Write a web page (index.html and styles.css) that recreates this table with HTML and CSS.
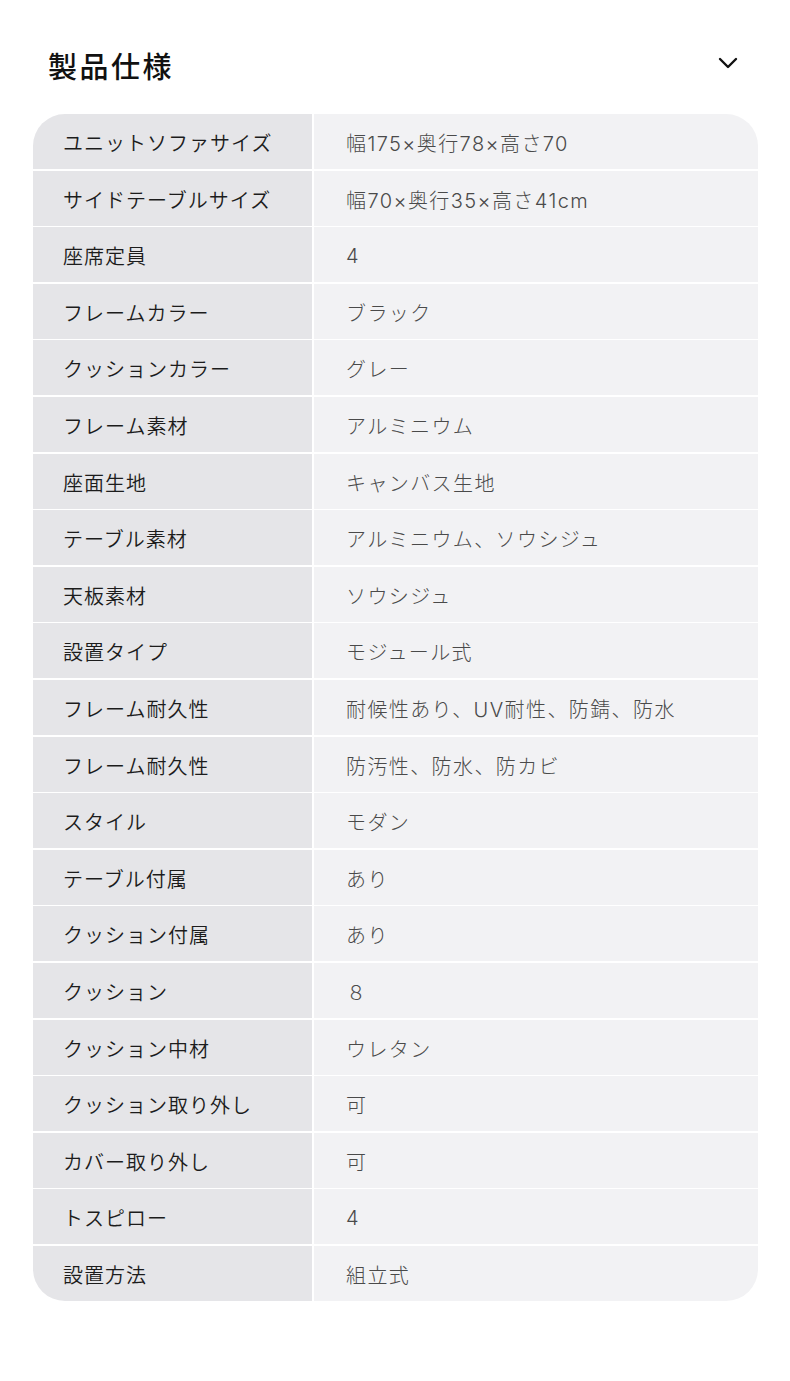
FILE: index.html
```html
<!DOCTYPE html>
<html lang="ja">
<head>
    <meta charset="UTF-8">
    <meta name="viewport" content="width=device-width, initial-scale=1.0">
    <title>製品仕様</title>
    <link rel="stylesheet" href="styles.css">
</head>
<body>

    <section class="spec">
        <div class="spec-header">
            <h2>製品仕様</h2>
            <svg class="chevron" width="20" height="12" viewBox="0 0 20 12">
                <path d="M2 2 L10 10 L18 2" fill="none" stroke="#111" stroke-width="2.4" stroke-linecap="round" stroke-linejoin="round"/>
            </svg>
        </div>

        <div class="spec-table">
            <div class="row"><div class="label">ユニットソファサイズ</div><div class="value">幅175×奥行78×高さ70</div></div>
            <div class="row"><div class="label">サイドテーブルサイズ</div><div class="value">幅70×奥行35×高さ41cm</div></div>
            <div class="row"><div class="label">座席定員</div><div class="value">4</div></div>
            <div class="row"><div class="label">フレームカラー</div><div class="value">ブラック</div></div>
            <div class="row"><div class="label">クッションカラー</div><div class="value">グレー</div></div>
            <div class="row"><div class="label">フレーム素材</div><div class="value">アルミニウム</div></div>
            <div class="row"><div class="label">座面生地</div><div class="value">キャンバス生地</div></div>
            <div class="row"><div class="label">テーブル素材</div><div class="value">アルミニウム、ソウシジュ</div></div>
            <div class="row"><div class="label">天板素材</div><div class="value">ソウシジュ</div></div>
            <div class="row"><div class="label">設置タイプ</div><div class="value">モジュール式</div></div>
            <div class="row"><div class="label">フレーム耐久性</div><div class="value">耐候性あり、UV耐性、防錆、防水</div></div>
            <div class="row"><div class="label">フレーム耐久性</div><div class="value">防汚性、防水、防カビ</div></div>
            <div class="row"><div class="label">スタイル</div><div class="value">モダン</div></div>
            <div class="row"><div class="label">テーブル付属</div><div class="value">あり</div></div>
            <div class="row"><div class="label">クッション付属</div><div class="value">あり</div></div>
            <div class="row"><div class="label">クッション</div><div class="value">８</div></div>
            <div class="row"><div class="label">クッション中材</div><div class="value">ウレタン</div></div>
            <div class="row"><div class="label">クッション取り外し</div><div class="value">可</div></div>
            <div class="row"><div class="label">カバー取り外し</div><div class="value">可</div></div>
            <div class="row"><div class="label">トスピロー</div><div class="value">4</div></div>
            <div class="row"><div class="label">設置方法</div><div class="value">組立式</div></div>
        </div>
    </section>

</body>
</html>
```

FILE: styles.css
```css
body {
    margin: 0;
    padding: 0;
    background: #fff;
    font-family: "Noto Sans CJK JP", "Noto Sans", sans-serif;
}

.spec {
    padding: 0 32px 0 33px;
}

.spec-header {
    display: flex;
    justify-content: space-between;
    align-items: center;
    height: 94px;
    padding: 20px 20px 0 15px;
}

.spec-header h2 {
    margin: 0;
    font-size: 29px;
    font-weight: 500;
    letter-spacing: 2.5px;
    color: #111;
    padding-bottom: 4px;
}

.chevron {
    margin-bottom: 8px;
}

.spec-table {
    display: flex;
    flex-direction: column;
    gap: 1.6px;
    border-radius: 32px;
    overflow: hidden;
    background: #fff;
}

.row {
    display: flex;
    height: 55px;
}

.label {
    width: 249px;
    flex-shrink: 0;
    padding: 2px 0 0 30px;
    margin-right: 2px;
    background: #e5e5e8;
    color: #1c1c1c;
    font-size: 20px;
    font-weight: 350;
    letter-spacing: 1px;
    display: flex;
    align-items: center;
}

.value {
    flex: 1;
    padding: 2px 0 0 32px;
    background: #f2f2f4;
    color: #4a4a4a;
    font-family: "Inter", "Noto Sans CJK JP", sans-serif;
    font-size: 20px;
    font-weight: 300;
    letter-spacing: 1.4px;
    display: flex;
    align-items: center;
}
```
